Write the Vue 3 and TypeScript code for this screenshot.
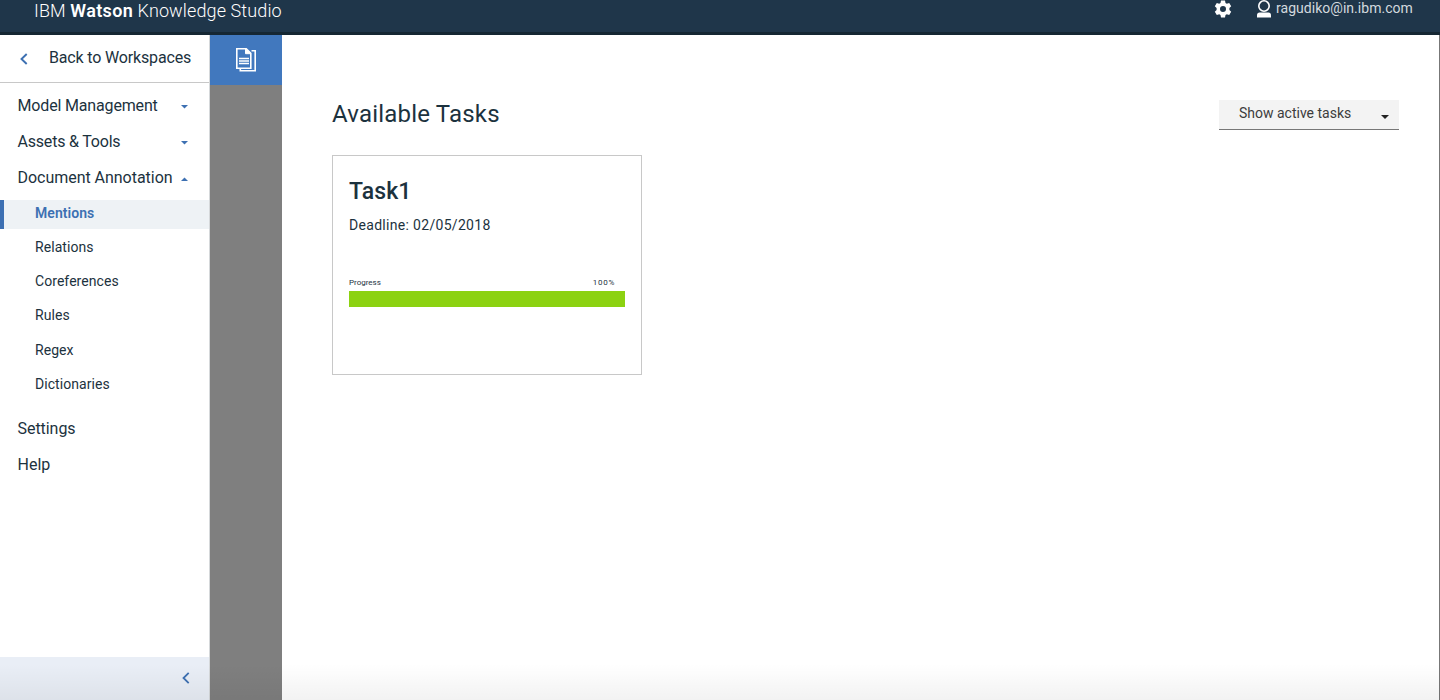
<script setup lang="ts">
import { ref } from 'vue'

interface Section { label: string; cls: string; open: boolean }

const sections: Section[] = [
  { label: 'Model Management', cls: 't-model', open: false },
  { label: 'Assets & Tools', cls: 't-assets', open: false },
  { label: 'Document Annotation', cls: 't-doc', open: true },
]
const pages: string[] = ['Mentions', 'Relations', 'Coreferences', 'Rules', 'Regex', 'Dictionaries']
const active = ref<string>('Mentions')
const progress = ref<number>(100)
</script>

<template>
  <div class="app">
    <header class="topbar">
      <div class="brand">IBM <b>Watson</b> Knowledge Studio</div>
      <div class="account">
        <svg class="gear" width="18" height="18" viewBox="0 0 18 18">
          <path fill="#fff" fill-rule="evenodd" d="M7 .5h4l.5 2.4 1.3.8 2.4-.8 2 3.4-1.8 1.7v2l1.8 1.7-2 3.4-2.4-.8-1.3.8-.5 2.4H7l-.5-2.4-1.3-.8-2.4.8-2-3.4L2.600 10V8L.8 6.300l2-3.400 2.400.8 1.300-.8ZM9 6a3 3 0 1 0 0 6 3 3 0 0 0 0-6Z" />
        </svg>
        <svg class="user" width="14" height="18" viewBox="0 0 14 18">
          <circle cx="7" cy="6" r="5.200" fill="none" stroke="#fff" stroke-width="1.600" />
          <path fill="#fff" d="M0 17.500v-2.300c0-1.600 1-2.700 2.500-2.700h9c1.500 0 2.500 1.100 2.500 2.700v2.300Z" />
        </svg>
        <span class="mail">ragudiko@in.ibm.com</span>
      </div>
    </header>

    <div class="body">
      <aside class="sidebar">
        <div class="back">
          <svg width="8" height="12" viewBox="0 0 8 12"><path d="M6.700 1 1.500 6l5.200 5" fill="none" stroke="#3d70b2" stroke-width="1.900" /></svg>
          <span>Back to Workspaces</span>
        </div>
        <nav class="menu">
          <div v-for="s in sections" :key="s.label" class="section">
            <span :class="s.cls">{{ s.label }}</span>
            <svg width="7" height="4" viewBox="0 0 7 4">
              <path fill="#3d70b2" :d="s.open ? 'M0 4 3.5 0.500 7 4Z' : 'M0 0 3.500 3.500 7 0Z'" />
            </svg>
          </div>
          <div class="pages">
            <div v-for="p in pages" :key="p" class="page" :class="{ active: p === active }" @click="active = p">
              <span>{{ p }}</span>
            </div>
          </div>
          <div class="section"><span class="t-settings">Settings</span></div>
          <div class="section"><span class="t-help">Help</span></div>
        </nav>
        <div class="collapse">
          <svg width="8" height="12" viewBox="0 0 8 12"><path d="M6.700.8 1.500 6l5.200 5.200" fill="none" stroke="#3d70b2" stroke-width="1.800" /></svg>
        </div>
      </aside>

      <div class="rail">
        <div class="rail-tab">
          <svg width="22" height="26" viewBox="0 0 22 26" fill="none" stroke="#fff">
            <path d="M1.800 1.800h9.500l4.500 4.500v14.900h-14Z" stroke-width="1.600" />
            <path d="M10.500 1.500v5.200h5.500Z" fill="#fff" stroke-width="1" />
            <path d="M16.500 3.800h3.700v19.900H5.300V21.500" stroke-width="1.600" />
            <path d="M4 11.500h10M4 14h10M4 16.500h10" stroke-width="1.300" />
          </svg>
        </div>
      </div>

      <main class="content">
        <div class="heading">
          <h1>Available Tasks</h1>
          <div class="filter">
            <span>Show active tasks</span>
            <svg width="8" height="4" viewBox="0 0 8 4"><path fill="#222" d="M0 0h8L4 4Z" /></svg>
          </div>
        </div>
        <section class="card">
          <h2>Task1</h2>
          <p class="deadline">Deadline: 02/05/2018</p>
          <div class="progress-label"><span>Progress</span><span class="percent">{{ progress }}%</span></div>
          <div class="track"><div class="fill" :style="{ width: progress + '%' }"></div></div>
        </section>
      </main>
    </div>
    <div class="shade"></div>
  </div>
</template>

<style>
body { margin: 0; overflow: hidden; }
</style>

<style scoped>
.app { position: relative; display: flex; flex-direction: column; width: 1440px; height: 700px; overflow: hidden; background: #fff; color: #1c323e; font-family: Roboto, "Liberation Sans", sans-serif; box-sizing: border-box; }
.app * { box-sizing: border-box; }
svg { display: block; flex: none; }
span { white-space: nowrap; }
.topbar { flex: none; height: 35px; display: flex; justify-content: space-between; padding: 0 27px 0 34px; background: #1f364a; border-bottom: 3px solid #152733; color: #fff; }
.brand { font-size: 18px; line-height: 22px; font-weight: 300; letter-spacing: .12px; white-space: nowrap; }
.brand b { font-weight: 600; letter-spacing: .35px; }
.account { display: flex; }
.user { margin-left: 25px; }
.mail { width: 137px; margin-left: 5px; font-size: 14px; line-height: 17px; letter-spacing: .03px; color: #d3d9de; }
.body { flex: 1; display: flex; min-height: 0; }
.sidebar { width: 210px; display: flex; flex-direction: column; border-right: 1px solid #d5d8da; }
.back { height: 48px; padding: 0 0 2px 20px; display: flex; align-items: center; border-bottom: 1px solid #c8c8c8; font-size: 16px; }
.back svg { margin-top: 2px; }
.back span { margin-left: 21px; letter-spacing: -.16px; }
.menu { flex: 1; padding-top: 5px; }
.section { height: 36px; padding: 0 21px 0 17.500px; display: flex; align-items: center; justify-content: space-between; font-size: 16px; line-height: 18px; }
.section svg { margin-top: 2px; }
.t-model { letter-spacing: -.16px; }
.t-assets { letter-spacing: -.2px; }
.t-doc { letter-spacing: -.03px; }
.t-settings { letter-spacing: -.05px; }
.pages { height: 215px; padding-top: 4px; }
.page { height: 29px; margin-bottom: 5px; padding: 0 0 3px 35px; display: flex; align-items: center; font-size: 14px; line-height: 16px; letter-spacing: .06px; }
.page:nth-child(4) { margin-bottom: 6px; }
.page.active { padding-left: 31px; border-left: 4px solid #3d70b2; background: #eef2f5; color: #3d70b2; font-weight: 600; }
.collapse { height: 43px; display: flex; align-items: center; justify-content: flex-end; padding: 0 19px 2px 0; background: #e9eef6; }
.rail { width: 72px; background: #7f7f7f; }
.rail-tab { height: 50px; display: flex; align-items: center; justify-content: center; background: #4178be; }
.content { flex: 1; padding: 65px 40px 0 50px; border-right: 1px solid #777; }
.heading { height: 55px; display: flex; justify-content: space-between; }
h1 { margin: 0; font-size: 24px; line-height: 28px; font-weight: 400; letter-spacing: .2px; white-space: nowrap; }
.filter { width: 180px; height: 30px; padding: 0 10px 3px 20px; display: flex; align-items: center; justify-content: space-between; background: #f3f3f3; border-bottom: 1px solid #777; font-size: 14px; line-height: 16px; color: #3c3c3c; }
.filter svg { margin-top: 7px; }
.card { width: 310px; height: 220px; border: 1px solid #c8c8c8; padding: 22px 16px 0; }
h2 { margin: 0; font-size: 23px; line-height: 28px; font-weight: 500; letter-spacing: .15px; }
.deadline { margin: 11px 0 0; font-size: 14px; line-height: 16px; letter-spacing: .31px; white-space: nowrap; }
.progress-label { display: flex; justify-content: space-between; margin-top: 45px; padding-right: 10px; font-size: 8px; line-height: 10px; }
.percent { letter-spacing: .7px; }
.track { height: 16px; margin-top: 3px; }
.fill { height: 16px; background: #8cd211; }
.shade { position: absolute; left: 0; right: 0; bottom: 0; height: 36px; background: linear-gradient(to bottom, rgba(0,0,0,0), rgba(0,0,0,.05)); pointer-events: none; }
</style>
